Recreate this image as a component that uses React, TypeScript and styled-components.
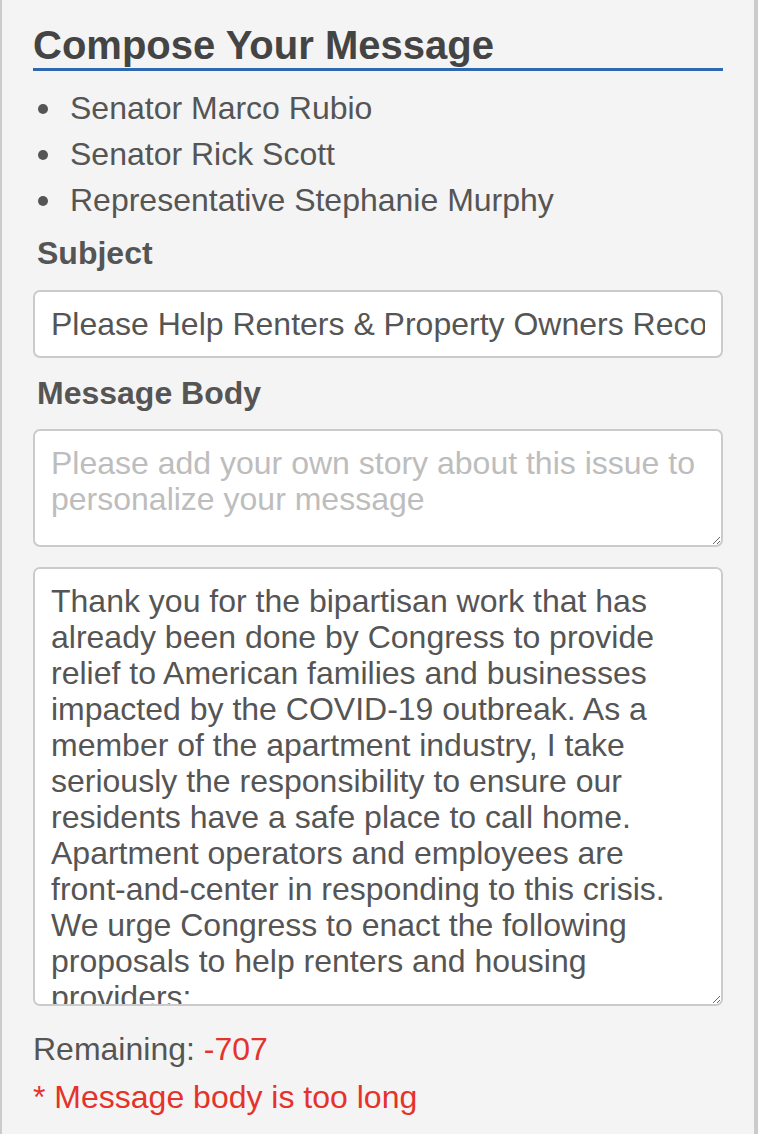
import React from "react";
import styled, { createGlobalStyle } from "styled-components";

const GlobalStyle = createGlobalStyle`
    html, body {
        margin: 0;
        padding: 0;
        background: #f4f4f4;
    }

    * {
        box-sizing: border-box;
    }
`;

const recipients = ["Senator Marco Rubio", "Senator Rick Scott", "Representative Stephanie Murphy"];

const body =
    "Thank you for the bipartisan work that has already been done by Congress to provide relief to American families and businesses impacted by the COVID-19 outbreak. As a member of the apartment industry, I take seriously the responsibility to ensure our residents have a safe place to call home. Apartment operators and employees are front-and-center in responding to this crisis. We urge Congress to enact the following proposals to help renters and housing providers:";

const App = (): JSX.Element => {
    return (
        <>
            <GlobalStyle />
            <Panel>
                <Heading>Compose Your Message</Heading>
                <Recipients>
                    {recipients.map((name) => (
                        <Recipient key={name}>{name}</Recipient>
                    ))}
                </Recipients>
                <Label htmlFor="subject">Subject</Label>
                <SubjectInput
                    id="subject"
                    type="text"
                    defaultValue="Please Help Renters & Property Owners Recover"
                />
                <Label htmlFor="story" $top={15}>
                    Message Body
                </Label>
                <TextBox
                    id="story"
                    $height={118}
                    placeholder="Please add your own story about this issue to personalize your message"
                />
                <TextBox $height={439} $top={20} defaultValue={body} />
                <Counter>
                    Remaining: <Alert>-707</Alert>
                </Counter>
                <ErrorText>* Message body is too long</ErrorText>
            </Panel>
        </>
    );
};

export default App;

const Panel = styled.div`
    min-height: 1134px;
    background: #f4f4f4;
    border-left: 2px solid #cbcbcb;
    border-right: 4px solid #cbcbcb;
    padding: 0 31px 20px;
    font-family: "Liberation Sans", Arial, sans-serif;
    color: #555;
    display: flex;
    flex-direction: column;
`;

const Heading = styled.h2`
    margin: 22px 0 0;
    font-size: 40px;
    line-height: 46px;
    font-weight: 700;
    color: #444;
    border-bottom: 3px solid #2d68b0;
`;

const Recipients = styled.ul`
    margin: 14px 0 0;
    padding: 0;
    list-style: none;
`;

const Recipient = styled.li`
    display: flex;
    align-items: center;
    font-size: 32px;
    line-height: 46px;
    color: #555;

    &::before {
        content: "";
        flex: none;
        width: 10px;
        height: 10px;
        border-radius: 50%;
        background: #555;
        margin: 2px 22px 0 5px;
    }
`;

const Label = styled.label<{ $top?: number }>`
    display: block;
    margin: ${(p) => p.$top ?? 10}px 0 16px 4px;
    font-size: 32px;
    line-height: 40px;
    font-weight: 700;
    color: #555;
`;

const fieldBase = `
    display: block;
    width: 100%;
    background: #fff;
    border: 2px solid #cbcbcb;
    border-radius: 7px;
    font-family: "Liberation Sans", Arial, sans-serif;
    font-size: 32px;
    color: #555;
    outline: none;
`;

const SubjectInput = styled.input`
    ${fieldBase}
    height: 68px;
    padding: 0 16px;
    margin: 1px 0 0;
`;

const TextBox = styled.textarea<{ $height: number; $top?: number }>`
    ${fieldBase}
    height: ${(p) => p.$height}px;
    margin: ${(p) => p.$top ?? 0}px 0 0;
    padding: 14px 16px;
    line-height: 36px;
    resize: vertical;
    scrollbar-width: none;

    &::placeholder {
        color: #bdbdbd;
    }
`;

const Counter = styled.div`
    margin-top: 23px;
    font-size: 32px;
    line-height: 40px;
    color: #555;
`;

const Alert = styled.span`
    color: #e5322b;
`;

const ErrorText = styled.div`
    margin-top: 8px;
    font-size: 32px;
    line-height: 40px;
    color: #e5322b;
`;
